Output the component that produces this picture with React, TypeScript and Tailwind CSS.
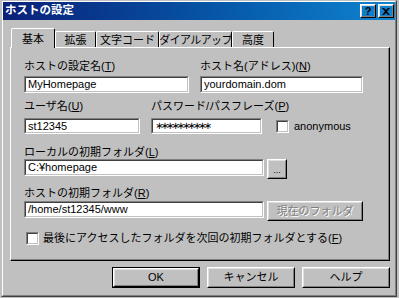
import type { ReactNode } from "react";

function Sunken({ className = "", children }: { className?: string; children?: ReactNode }) {
  return (
    <div className={`border border-t-[#808080] border-l-[#808080] border-b-white border-r-white ${className}`}>
      <div className="h-full border border-t-[#404040] border-l-[#404040] border-b-[#c0c0c0] border-r-[#c0c0c0] bg-white flex items-center px-[2px] overflow-hidden whitespace-nowrap">
        {children}
      </div>
    </div>
  );
}

function Raised({ className = "", children }: { className?: string; children?: ReactNode }) {
  return (
    <div className={`border border-t-white border-l-white border-b-black border-r-black ${className}`}>
      <div className="h-full border border-t-[#dfdfdf] border-l-[#dfdfdf] border-b-[#808080] border-r-[#808080] flex items-center justify-center">
        {children}
      </div>
    </div>
  );
}

function Check() {
  return <Sunken className="w-[13px] h-[13px] shrink-0" />;
}

function Label({ text, k }: { text: string; k: string }) {
  return (
    <div className="h-[14px] leading-[14px] whitespace-nowrap">
      {text}(<u>{k}</u>)
    </div>
  );
}

const tabs = [
  { label: "基本", w: "w-[44px]", active: true },
  { label: "拡張", w: "w-[41px]" },
  { label: "文字コード", w: "w-[63px]" },
  { label: "ダイアルアップ", w: "w-[73px] tracking-[-0.6px]" },
  { label: "高度", w: "w-[42px]" },
];

export default function App() {
  return (
    <div className="w-[399px] h-[298px] bg-[#c0c0c0] font-['Liberation_Sans','Noto_Sans_CJK_JP',sans-serif] text-[11px] text-black leading-none select-none">
      <div className="ml-[1px] w-[396px] h-[297px] border border-t-[#c0c0c0] border-l-[#c0c0c0] border-b-[#404040] border-r-[#404040]">
        <div className="h-full border border-t-white border-l-white border-b-[#808080] border-r-[#808080] flex flex-col">
          {/* title bar */}
          <div className="h-[18px] flex items-center bg-linear-to-r from-[#0a1f78] to-[#1084d0] pl-[2px] pr-[1px]">
            <span className="text-white font-bold text-[11.5px]">ホストの設定</span>
            <div className="ml-auto flex gap-[2px]">
              <Raised className="w-[16px] h-[14px]">
                <span className="font-bold text-[11px] leading-none">?</span>
              </Raised>
              <Raised className="w-[16px] h-[14px]">
                <svg width="8" height="7" viewBox="0 0 8 7">
                  <path d="M0 0h2l2 2 2-2h2L5 3.5 8 7H6L4 5 2 7H0l3-3.5z" fill="#000" />
                </svg>
              </Raised>
            </div>
          </div>

          {/* tabs */}
          <div className="mt-[8px] ml-[8px] h-[19px] flex items-end">
            {tabs.map((t) =>
              t.active ? (
                <div
                  key={t.label}
                  className={`${t.w} h-[20px] -mb-[1px] relative z-10 bg-[#c0c0c0] border-t border-l border-r border-t-white border-l-white border-r-black rounded-t-[2px] flex justify-center pt-[4px] leading-[13px] whitespace-nowrap`}
                >
                  {t.label}
                </div>
              ) : (
                <div
                  key={t.label}
                  className={`${t.w} h-[16px] border-t border-l border-r border-t-white border-l-white border-r-black rounded-t-[2px] flex justify-center pt-[2px] leading-[13px] whitespace-nowrap`}
                >
                  {t.label}
                </div>
              )
            )}
          </div>

          <div className="ml-[7px] w-[380px] flex flex-col">
            {/* panel */}
            <div className="h-[214px] border border-t-white border-l-white border-b-black border-r-black">
              <div className="h-full border-r border-b border-r-[#808080] border-b-[#808080] pl-[13px] flex flex-col">
                <div className="mt-[11px] flex gap-[11px]">
                  <div className="w-[165px] flex flex-col">
                    <Label text="ホストの設定名" k="T" />
                    <Sunken className="mt-[3px] h-[17px]">MyHomepage</Sunken>
                  </div>
                  <div className="w-[163px] flex flex-col">
                    <Label text="ホスト名(アドレス)" k="N" />
                    <Sunken className="mt-[3px] h-[17px]">yourdomain.dom</Sunken>
                  </div>
                </div>

                <div className="mt-[6px] flex items-end">
                  <div className="w-[116px] flex flex-col">
                    <Label text="ユーザ名" k="U" />
                    <Sunken className="mt-[5px] h-[16px]">st12345</Sunken>
                  </div>
                  <div className="ml-[11px] w-[111px] flex flex-col">
                    <Label text="パスワード/パスフレーズ" k="P" />
                    <Sunken className="mt-[5px] h-[16px]">
                      <span className="font-['DejaVu_Sans',sans-serif] text-[10px] leading-[12px] tracking-[-3px]">∗∗∗∗∗∗∗∗∗∗</span>
                    </Sunken>
                  </div>
                  <div className="ml-[14px] h-[16px] flex items-center">
                    <Check />
                    <span className="ml-[5px]">anonymous</span>
                  </div>
                </div>

                <div className="mt-[11px]">
                  <Label text="ローカルの初期フォルダ" k="L" />
                </div>
                <div className="flex items-start gap-[3px]">
                  <Sunken className="w-[240px] h-[17px]">C:¥homepage</Sunken>
                  <Raised className="w-[20px] h-[20px]">
                    <span className="text-[9px] pt-[3px]">...</span>
                  </Raised>
                </div>

                <div className="mt-[7px]">
                  <Label text="ホストの初期フォルダ" k="R" />
                </div>
                <div className="mt-[1px] flex items-start gap-[3px]">
                  <Sunken className="w-[240px] h-[17px]">/home/st12345/www</Sunken>
                  <Raised className="w-[96px] h-[20px]">
                    <span className="text-[#808080] [text-shadow:1px_1px_0_#fff]">現在のフォルダ</span>
                  </Raised>
                </div>

                <div className="mt-[10px] h-[15px] ml-[2px] flex items-center">
                  <Check />
                  <span className="ml-[4px] whitespace-nowrap">
                    最後にアクセスしたフォルダを次回の初期フォルダとする(<u>F</u>)
                  </span>
                </div>
              </div>
            </div>

            {/* dialog buttons */}
            <div className="mt-[6px] flex justify-end gap-[7px]">
              <div className="w-[88px] h-[21px] border border-black">
                <Raised className="h-full">OK</Raised>
              </div>
              <Raised className="w-[88px] h-[21px]">キャンセル</Raised>
              <Raised className="w-[88px] h-[21px]">ヘルプ</Raised>
            </div>
          </div>
        </div>
      </div>
    </div>
  );
}
